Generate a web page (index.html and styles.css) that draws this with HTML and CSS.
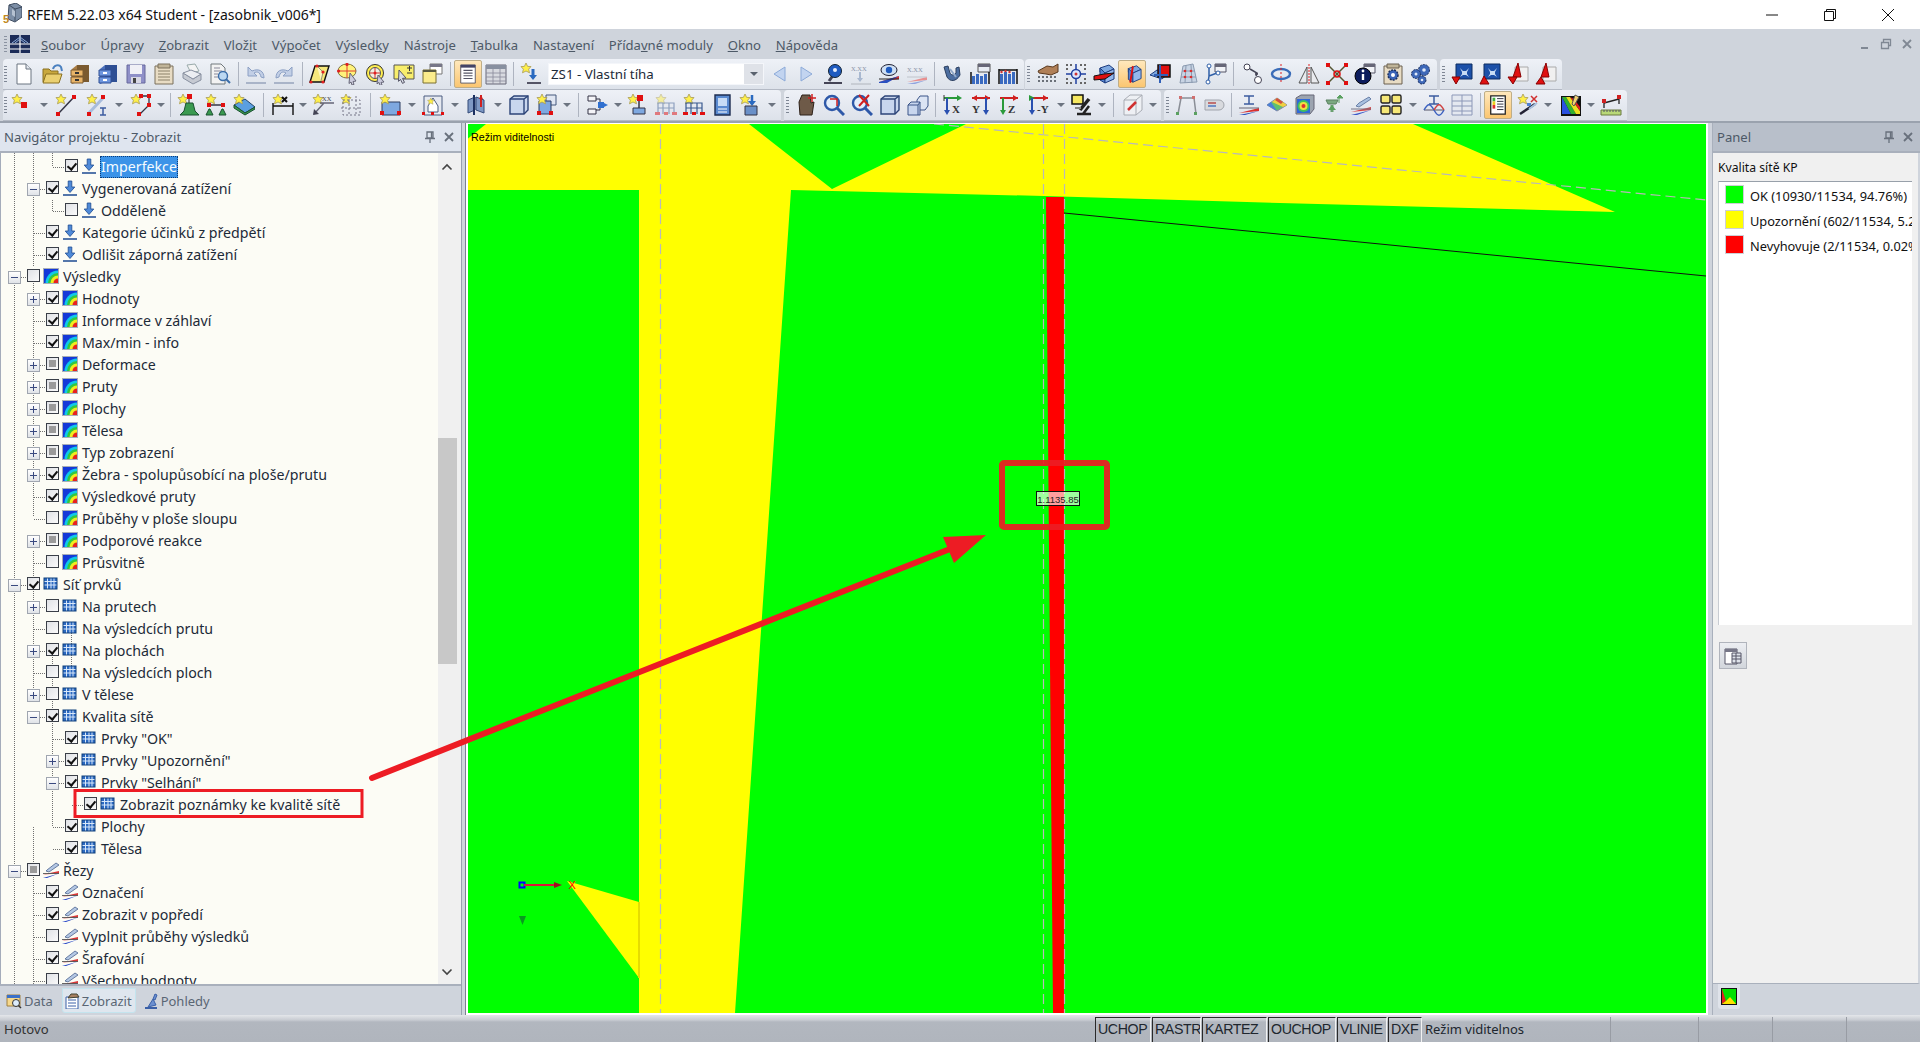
FILE: index.html
```html
<!DOCTYPE html>
<html lang="cs">
<head>
<meta charset="utf-8">
<title>RFEM 5.22.03 x64 Student - [zasobnik_v006*]</title>
<link rel="stylesheet" href="styles.css">
</head>
<body>
<svg class="defs" width="0" height="0">
<defs>
<symbol id="star" viewBox="0 0 22 22"><path d="M6 0l1.600 3.400L11 3.600 8.600 6.200l.9 3.600L6 8 2.500 9.800l.9-3.600L1 3.600l3.400-.2z" fill="#fff04a" stroke="#a89a50" stroke-width=".8"/></symbol>
<symbol id="new" viewBox="0 0 22 22"><path d="M4 1h9l5 5v15H4z" fill="#fff" stroke="#6b7480"/><path d="M13 1v5h5" fill="#e4e8ee" stroke="#6b7480"/></symbol>
<symbol id="open" viewBox="0 0 22 22"><path d="M2 19V6h6l2 2h7v3" fill="#c8a83e" stroke="#8a7020"/><path d="M2 20l3-9h16l-3 9z" fill="#ead070" stroke="#8a7020"/><path d="M12 6c1-4 6-5 8-2l1 4" fill="none" stroke="#4a80c0" stroke-width="2"/></symbol>
<symbol id="cabT" viewBox="0 0 22 22"><path d="M8 2h12v17H8z" fill="#7a5a30"/><path d="M3 6l5-4v17l-5 2z" fill="#a87c44"/><path d="M2 7h12v6H2zM2 14h12v6H2z" fill="#e8b468" stroke="#7a5a30"/><path d="M6 9h4v2H6zM6 16h4v2H6z" fill="#333"/></symbol>
<symbol id="cabB" viewBox="0 0 22 22"><path d="M8 2h12v17H8z" fill="#2e4f94"/><path d="M3 6l5-4v17l-5 2z" fill="#4a70bc"/><path d="M2 7h12v6H2zM2 14h12v6H2z" fill="#6e96de" stroke="#2e4f94"/><path d="M6 9h4v2H6zM6 16h4v2H6z" fill="#fff"/></symbol>
<symbol id="save" viewBox="0 0 22 22"><path d="M2 2h18v18H2z" fill="#8f90c8" stroke="#66689c"/><path d="M5 2h12v9H5z" fill="#f0f0f6"/><path d="M6 14h10v6H6z" fill="#d8d8e4"/><path d="M8 15h3v5H8z" fill="#444"/></symbol>
<symbol id="notes" viewBox="0 0 22 22"><path d="M2 3h18v18H2z" fill="#e8dcc4" stroke="#7a705c"/><path d="M5 1h12v4H5z" fill="#c0b498" stroke="#7a705c"/><path d="M5 8h12M5 11h12M5 14h12M5 17h12" stroke="#8a8068"/></symbol>
<symbol id="print" viewBox="0 0 22 22"><path d="M6 2l8-1 4 7-8 2z" fill="#f4f4f4" stroke="#9aa"/><path d="M2 10l10 6 8-5v6l-8 4-10-6z" fill="#c6cad2" stroke="#8890a0"/><path d="M2 10l8-3 10 4-8 5z" fill="#eceef2" stroke="#8890a0"/></symbol>
<symbol id="prev" viewBox="0 0 22 22"><path d="M2 1h10l4 4v16H2z" fill="#f2f2f2" stroke="#70787c"/><path d="M5 5h6M5 8h8M5 11h4M5 14h4" stroke="#889"/><circle cx="14" cy="13" r="4.500" fill="#bcd8f2" stroke="#3a6ca8" stroke-width="1.400"/><path d="M17 16l4 4" stroke="#3a6ca8" stroke-width="2"/></symbol>
<symbol id="undo" viewBox="0 0 22 22"><path d="M1 20h20" stroke="#a9b4c8" stroke-width="2"/><path d="M3 4v9h9l-3-3c3-2 6-1 7 4l3 1c0-7-5-10-12-7z" fill="#c2cfe6" stroke="#8ca0c4"/></symbol>
<symbol id="redo" viewBox="0 0 22 22"><path d="M1 20h20" stroke="#a9b4c8" stroke-width="2"/><path d="M19 4v9h-9l3-3c-3-2-6-1-7 4l-3 1c0-7 5-10 12-7z" fill="#c2cfe6" stroke="#8ca0c4"/></symbol>
<symbol id="plane" viewBox="0 0 22 22"><path d="M6 3h14l-5 16H1z" fill="#f6e87c" stroke="#111" stroke-width="1.400"/><path d="M8 3l6 6-2 9" fill="#fff8c0" stroke="#555" stroke-width=".6"/><g fill="#e02020"><circle cx="8" cy="3" r="1.600"/><circle cx="2" cy="19" r="1.600"/><circle cx="14" cy="19" r="1.600"/><circle cx="14" cy="9" r="1.600"/></g></symbol>
<symbol id="zoomy" viewBox="0 0 22 22"><ellipse cx="10" cy="8" rx="9" ry="7" fill="#fff27a" stroke="#7c7440"/><path d="M10 1v14M1 8h18" stroke="#e04030"/><circle cx="10" cy="1.500" r="1.600" fill="#e02020"/><circle cx="1.600" cy="8" r="1.600" fill="#e02020"/><path d="M13 10l6 8-3 .5 1 3-2 .5-1-3-2 1.500z" fill="#ccd" stroke="#667"/></symbol>
<symbol id="target" viewBox="0 0 22 22"><circle cx="10" cy="10" r="8.500" fill="#ffee50" stroke="#333"/><circle cx="10" cy="10" r="5.500" fill="#f0f0e4" stroke="#555"/><path d="M10 5v10M5 10h10" stroke="#d03030"/><circle cx="10" cy="10" r="1.500" fill="#e02020"/><path d="M13 12l6 7-3 .4 1 2.600-2 .4-1-3-2 1.500z" fill="#ccd" stroke="#667"/></symbol>
<symbol id="note" viewBox="0 0 22 22"><path d="M1 2h20v14H1z" fill="#f8ee6c" stroke="#555"/><path d="M14 5h5M16.500 3v5M14 10h5" stroke="#333"/><path d="M6 7l7 8-3.500.4 2 4-2 1-2-4-2 2z" fill="#d8dce6" stroke="#556"/></symbol>
<symbol id="win" viewBox="0 0 22 22"><path d="M9 1h12v10H9z" fill="#fff" stroke="#777"/><path d="M9 1h12v3H9z" fill="#778"/><path d="M2 7h13v13H2z" fill="#fbec8c" stroke="#7a7030"/><path d="M2 7h13v2H2z" fill="#5a5a40"/></symbol>
<symbol id="list" viewBox="0 0 22 22"><path d="M3 1h16v20H3z" fill="#fff" stroke="#556"/><path d="M3 1h16v3H3z" fill="#446"/><path d="M6 7h10M6 10h10M6 13h10M6 16h10" stroke="#556" stroke-width="1.200"/></symbol>
<symbol id="table" viewBox="0 0 22 22"><path d="M1 2h20v19H1z" fill="#d8dae0" stroke="#667"/><path d="M1 2h20v4H1z" fill="#8890a0"/><path d="M1 10h20M1 14h20M1 18h20M8 6v15M15 6v15" stroke="#889" stroke-width=".8"/></symbol>
<symbol id="zs" viewBox="0 0 22 22"><use href="#star" width="22" height="22"/><path d="M13 6v9" stroke="#2a6ac0" stroke-width="3"/><path d="M9 12h8l-4 5z" fill="#2a6ac0"/><path d="M7 20h14" stroke="#556" stroke-width="2"/></symbol>
<symbol id="lprev" viewBox="0 0 22 22"><path d="M16 4v14L5 11z" fill="#c2d4f0" stroke="#8caad8"/></symbol>
<symbol id="lnext" viewBox="0 0 22 22"><path d="M6 4v14l11-7z" fill="#c2d4f0" stroke="#8caad8"/></symbol>
<symbol id="ball" viewBox="0 0 22 22"><path d="M2 20h18" stroke="#445" stroke-width="2"/><path d="M7 18l5-7" stroke="#445" stroke-width="3"/><circle cx="13" cy="8" r="6.500" fill="#1f5bc0" stroke="#123"/><circle cx="13" cy="7" r="2" fill="#e8eefc"/></symbol>
<symbol id="xx" viewBox="0 0 22 22"><text x="1" y="8" class="mini pale">X.XX</text><path d="M10 9v9" stroke="#a8b8d0" stroke-width="2"/><path d="M7 15h6l-3 4z" fill="#a8b8d0"/><path d="M1 21h20" stroke="#c0c4cc" stroke-width="1.500"/></symbol>
<symbol id="eye" viewBox="0 0 22 22"><ellipse cx="11" cy="7" rx="8" ry="5.500" fill="#cfe0f4" stroke="#223"/><circle cx="11" cy="7" r="3.200" fill="#1f5bc0"/><path d="M1 19l20-6v3z" fill="#d83030"/><path d="M1 19l20-6-12 7H1z" fill="#2a50c0"/><path d="M1 16h20" stroke="#222"/></symbol>
<symbol id="xxb" viewBox="0 0 22 22"><text x="1" y="9" class="mini pale">X.XX</text><path d="M1 19l20-5v3z" fill="#e89090"/><path d="M1 21l20-4-12 4z" fill="#90a4e0"/><path d="M1 14h20" stroke="#c0c4cc"/></symbol>
<symbol id="hook" viewBox="0 0 22 22"><path d="M3 4l3 10c3 5 9 5 13-2l-1-8-3 1v5c-2 3-5 2-6 0L7 3z" fill="#4c6ea0" stroke="#2c4060"/><path d="M9 6l6 8" stroke="#90a8c8" stroke-width="2"/></symbol>
<symbol id="barsw" viewBox="0 0 22 22"><path d="M9 1h12v8H9z" fill="#e8ecf4" stroke="#555"/><path d="M9 1h12v3H9z" fill="#667"/><path d="M2 21V9M20 21V9" stroke="#111" stroke-width="1.500"/><g fill="#3a6ac0"><rect x="3" y="13" width="3" height="8"/><rect x="7" y="11" width="3" height="10"/><rect x="11" y="13" width="3" height="8"/><rect x="15" y="11" width="3" height="10"/></g></symbol>
<symbol id="bars" viewBox="0 0 22 22"><path d="M2 21V6M20 21V6M2 7h18" stroke="#111" stroke-width="1.500"/><g fill="#3a6ac0"><rect x="3" y="11" width="3" height="10"/><rect x="7" y="9" width="3" height="12"/><rect x="11" y="11" width="3" height="10"/><rect x="15" y="9" width="3" height="12"/></g><g fill="#d03030"><circle cx="4.500" cy="9" r="1.200"/><circle cx="8.500" cy="8" r="1.200"/><circle cx="12.500" cy="9" r="1.200"/></g></symbol>
<symbol id="hand" viewBox="0 0 22 22"><g fill="#6a7078"><rect x="1" y="13" width="2" height="2"/><rect x="5" y="13" width="2" height="2"/><rect x="9" y="13" width="2" height="2"/><rect x="13" y="13" width="2" height="2"/><rect x="17" y="13" width="2" height="2"/><rect x="1" y="17" width="2" height="2"/><rect x="5" y="17" width="2" height="2"/><rect x="9" y="17" width="2" height="2"/><rect x="13" y="17" width="2" height="2"/><rect x="17" y="17" width="2" height="2"/></g><path d="M1 8l9-5 6 1 5-3v8l-7 3-5-1-7-1z" fill="#b08058" stroke="#5a3a20"/></symbol>
<symbol id="gridc" viewBox="0 0 22 22"><g fill="#666"><rect x="1" y="1" width="2" height="2"/><rect x="5" y="1" width="2" height="2"/><rect x="15" y="1" width="2" height="2"/><rect x="19" y="1" width="2" height="2"/><rect x="1" y="5" width="2" height="2"/><rect x="19" y="5" width="2" height="2"/><rect x="1" y="15" width="2" height="2"/><rect x="19" y="15" width="2" height="2"/><rect x="1" y="19" width="2" height="2"/><rect x="5" y="19" width="2" height="2"/><rect x="15" y="19" width="2" height="2"/><rect x="19" y="19" width="2" height="2"/></g><path d="M11 1v20M1 11h20" stroke="#2040a0" stroke-width="1.500"/><circle cx="11" cy="11" r="4.500" fill="#dce6ff" stroke="#2040a0" stroke-width="1.500"/><circle cx="11" cy="11" r="1.500" fill="#d03030"/></symbol>
<symbol id="cubeN" viewBox="0 0 22 22"><path d="M7 5l9-3 5 4-9 4-5-1z" fill="#7ea8e0" stroke="#1c3c80"/><path d="M7 5v12l5 3V10z" fill="#5684d0" stroke="#1c3c80"/><path d="M12 10l9-4v10l-9 4z" fill="#94b8ec" stroke="#1c3c80"/><path d="M1 13l10-2 10-1-9 6-11 1z" fill="#e01010" stroke="#111"/></symbol>
<symbol id="cubeO" viewBox="0 0 22 22"><path d="M7 5l9-3 5 4-9 4-5-1z" fill="#7ea8e0" stroke="#1c3c80"/><path d="M7 5v12l5 3V10z" fill="#5684d0" stroke="#1c3c80"/><path d="M12 10l9-4v10l-9 4z" fill="#94b8ec" stroke="#1c3c80"/><path d="M11 2l2 1-3 18-2-1z" fill="#e01010"/></symbol>
<symbol id="cubeR" viewBox="0 0 22 22"><path d="M1 12l7-5 13 2-8 7z" fill="#7ea8e0" stroke="#1c3c80"/><path d="M9 2h12v12H9z" fill="#e01010" stroke="#111" stroke-width="1.500"/><path d="M11 2v18M5 12h14" stroke="#3060b8" stroke-width="2"/></symbol>
<symbol id="gridb" viewBox="0 0 22 22"><path d="M3 20l3-17 10-2 4 18z" fill="#c8d4e4" stroke="#8a9ab0"/><path d="M4 14h15M5 8h13M9 2l-1 18M14 2l1 18" stroke="#8a9ab0"/><g fill="#d83030"><circle cx="8" cy="8" r="1.300"/><circle cx="14" cy="8" r="1.300"/><circle cx="8" cy="14" r="1.300"/><circle cx="14" cy="14" r="1.300"/></g></symbol>
<symbol id="pathw" viewBox="0 0 22 22"><path d="M10 1h11v8H10z" fill="#f0f2f6" stroke="#556"/><path d="M10 1h11v3H10z" fill="#667"/><path d="M4 4v9l-1 7M4 13l8-3" fill="none" stroke="#3060a8" stroke-width="1.500"/><circle cx="4" cy="3" r="2" fill="#fff" stroke="#3060a8"/><circle cx="3" cy="19" r="2" fill="#fff" stroke="#3060a8"/><circle cx="13" cy="10" r="2" fill="#fff" stroke="#3060a8"/></symbol>
<symbol id="links" viewBox="0 0 22 22"><circle cx="5" cy="4" r="3" fill="#fff" stroke="#445"/><circle cx="16" cy="17" r="3.500" fill="#fff" stroke="#445"/><path d="M8 6l7 4-1 3M16 11l-3 0" fill="none" stroke="#445" stroke-width="1.500"/></symbol>
<symbol id="rot" viewBox="0 0 22 22"><ellipse cx="11" cy="11" rx="9" ry="5" fill="none" stroke="#3a6cb8" stroke-width="2.400"/><path d="M11 1v20" stroke="#e02020" stroke-dasharray="2 2"/></symbol>
<symbol id="mirror" viewBox="0 0 22 22"><path d="M9 4v16H1z" fill="#e8eaee" stroke="#555"/><path d="M13 4v16h8z" fill="#e8eaee" stroke="#555"/><path d="M11 1v20" stroke="#e02020" stroke-dasharray="2 1"/></symbol>
<symbol id="redx" viewBox="0 0 22 22"><path d="M2 2l18 18M20 2L2 20" stroke="#553" stroke-width="1.500"/><g fill="#e01010"><rect y="0" width="4" height="4"/><rect x="18" width="4" height="4"/><rect y="18" width="4" height="4"/><rect x="18" y="18" width="4" height="4"/></g><circle cx="11" cy="11" r="3" fill="none" stroke="#e01010" stroke-width="1.500"/></symbol>
<symbol id="info" viewBox="0 0 22 22"><path d="M10 1h11v9H10z" fill="#f0f2f6" stroke="#556"/><path d="M10 1h11v3H10z" fill="#667"/><circle cx="9" cy="13" r="8" fill="#0c1c5c" stroke="#000"/><path d="M9 11v6" stroke="#fff" stroke-width="2.400"/><circle cx="9" cy="8" r="1.400" fill="#fff"/></symbol>
<symbol id="geardoc" viewBox="0 0 22 22"><path d="M2 3h18v18H2z" fill="#e8dcc4" stroke="#6a6050"/><path d="M5 1h12v4H5z" fill="#bfb498" stroke="#6a6050"/><circle cx="11" cy="12" r="5" fill="#3a64b8" stroke="#1c3060" stroke-width="1.500" stroke-dasharray="2 1"/><circle cx="11" cy="12" r="2" fill="#fff"/></symbol>
<symbol id="gears" viewBox="0 0 22 22"><g fill="#3e68b8" stroke="#1c3060" stroke-dasharray="2 1"><circle cx="14" cy="7" r="5.500"/><circle cx="6" cy="11" r="4.500"/><circle cx="12" cy="17" r="4"/></g><g fill="#dfe8f8"><circle cx="14" cy="7" r="1.800"/><circle cx="6" cy="11" r="1.500"/><circle cx="12" cy="17" r="1.300"/></g></symbol>
<symbol id="blueD" viewBox="0 0 22 22"><path d="M5 1h16v15H5z" fill="#1c50a8" stroke="#0c2c60"/><path d="M9 5l3 3h3l3-3-2 4v2l2 3-3-2h-3l-3 2 2-3V9z" fill="#c8dcf4"/><path d="M1 14h8l-4 7z" fill="#e01010" stroke="#800"/></symbol>
<symbol id="blueU" viewBox="0 0 22 22"><path d="M5 1h16v15H5z" fill="#1c50a8" stroke="#0c2c60"/><path d="M9 5l3 3h3l3-3-2 4v2l2 3-3-2h-3l-3 2 2-3V9z" fill="#c8dcf4"/><path d="M1 21h9L5 13z" fill="#e01010" stroke="#800"/></symbol>
<symbol id="redD" viewBox="0 0 22 22"><path d="M8 4h13v14H8z" fill="#f0f0f0" stroke="#aaa"/><path d="M11 0l-5 14h8z" fill="#e01010" stroke="#800"/><path d="M1 14h9l-4 7z" fill="#e01010" stroke="#800"/></symbol>
<symbol id="redU" viewBox="0 0 22 22"><path d="M8 4h13v14H8z" fill="#f0f0f0" stroke="#aaa"/><path d="M11 0l-5 14h8z" fill="#e01010" stroke="#800"/><path d="M1 21h9l-4-7z" fill="#e01010" stroke="#800"/></symbol>
<symbol id="sPt" viewBox="0 0 22 22"><use href="#star" width="22" height="22"/><rect x="10" y="8" width="6" height="6" fill="#e01010"/></symbol>
<symbol id="sLine" viewBox="0 0 22 22"><use href="#star" width="22" height="22"/><path d="M3 20L19 3" stroke="#334" stroke-width="1.500"/><rect x="17" y="1" width="4" height="4" fill="#e01010"/><rect x="1" y="18" width="4" height="4" fill="#e01010"/></symbol>
<symbol id="sLineI" viewBox="0 0 22 22"><use href="#star" width="22" height="22"/><path d="M3 19L17 4" stroke="#a8bcdc" stroke-width="3"/><rect x="15" y="1" width="4" height="4" fill="#e01010"/><rect x="1" y="18" width="4" height="4" fill="#e01010"/><path d="M14 14h6M14 21h6M17 14v7" stroke="#3c5ca0" stroke-width="1.500"/></symbol>
<symbol id="sPoly" viewBox="0 0 22 22"><use href="#star" width="22" height="22"/><path d="M10 2h9v9l-9 9" fill="none" stroke="#334" stroke-width="1.300"/><g fill="#e01010"><rect x="9" y="0" width="4" height="4"/><rect x="17" y="0" width="4" height="4"/><rect x="17" y="9" width="4" height="4"/><rect x="7" y="18" width="4" height="4"/></g></symbol>
<symbol id="sSup" viewBox="0 0 22 22"><use href="#star" width="22" height="22"/><rect x="10" y="0" width="5" height="5" fill="#e01010"/><path d="M12 5v5" stroke="#222"/><path d="M3 21l4-4 2-8h7l2 8 4 4z" fill="#3a9a50" stroke="#1a5030"/></symbol>
<symbol id="sTruss" viewBox="0 0 22 22"><use href="#star" width="22" height="22"/><path d="M4 11h14" stroke="#334" stroke-width="1.500"/><rect x="2" y="9" width="4" height="4" fill="#e01010"/><rect x="16" y="9" width="4" height="4" fill="#e01010"/><path d="M1 21l3-6h1l3 6zM14 21l3-6h1l3 6z" fill="#3a9a50" stroke="#1a5030"/></symbol>
<symbol id="sPlate" viewBox="0 0 22 22"><path d="M1 11l11-6 10 8-10 6z" fill="#5a9fe0" stroke="#246"/><path d="M1 11v3l11 7 10-6v-2l-10 6z" fill="#3a9a50" stroke="#1a5030"/><use href="#star" width="22" height="22"/></symbol>
<symbol id="sDim" viewBox="0 0 22 22"><use href="#star" width="22" height="22"/><path d="M1 12h20M1 9v12M21 9v12" stroke="#111" stroke-width="1.400"/><path d="M10 3l5 5M15 3l-5 5" stroke="#111" stroke-width="2"/></symbol>
<symbol id="sXx" viewBox="0 0 22 22"><use href="#star" width="22" height="22"/><text x="10" y="7" class="mini">XX</text><path d="M2 20L12 9M8 9h14" stroke="#667" stroke-width="1.400"/><path d="M1 21l1-6 5 5z" fill="#445"/></symbol>
<symbol id="sGrid" viewBox="0 0 22 22"><use href="#star" width="22" height="22"/><path d="M3 6h17v15H3z" fill="none" stroke="#778" stroke-dasharray="2 2"/><path d="M9 2v20M16 2v20M1 14h20" stroke="#778" stroke-dasharray="2 2"/></symbol>
<symbol id="sBox" viewBox="0 0 22 22"><path d="M3 8h18v13H3z" fill="#7ea8e0" stroke="#2c3c60"/><use href="#star" width="22" height="22"/><rect x="1" y="17" width="4" height="4" fill="#e01010"/><rect x="18" y="17" width="4" height="4" fill="#e01010"/></symbol>
<symbol id="sHouse" viewBox="0 0 22 22"><path d="M2 2h18v19H2z" fill="#e6e9f0" stroke="#4a5c80"/><path d="M6 12l5-8 5 8v6H6z" fill="#fff" stroke="#4a5c80"/><use href="#star" x="5" y="4" width="14" height="14"/><g fill="#e01010"><rect y="18" width="3" height="3"/><rect x="19" y="18" width="3" height="3"/><rect x="9" y="18" width="3" height="3"/></g></symbol>
<symbol id="sArrows" viewBox="0 0 22 22"><path d="M3 6l7-3v13l-7 3zM11 3l8 3v13l-8-3z" fill="#7e98c4" stroke="#334a78"/><path d="M9 1v20" stroke="#1c3060" stroke-width="2"/><path d="M16 1v12" stroke="#d02020" stroke-width="2"/><path d="M14 5l2-4 2 4z" fill="#d02020"/></symbol>
<symbol id="cube" viewBox="0 0 22 22"><path d="M2 5l4-3h14v14l-4 4H2z" fill="#c8d6ee" stroke="#2c4478" stroke-width="1.400"/><path d="M2 5h14v15M16 5l4-3" fill="none" stroke="#2c4478" stroke-width="1.400"/></symbol>
<symbol id="sCubes" viewBox="0 0 22 22"><path d="M10 1h10v10H10z" fill="#e0e6f2" stroke="#44587c"/><path d="M3 7h12v13H3z" fill="#7ea8e0" stroke="#2c3c60"/><use href="#star" width="22" height="22"/><rect x="1" y="17" width="4" height="4" fill="#e01010"/><rect x="13" y="17" width="4" height="4" fill="#e01010"/></symbol>
<symbol id="flow" viewBox="0 0 22 22"><path d="M1 2h8v5H1zM1 15h8v5H1z" fill="#f4f4f8" stroke="#334"/><path d="M9 5h4v11H9" fill="none" stroke="#334"/><path d="M11 8h6v6h-6z" fill="#3070d0"/><path d="M17 9l4 2-4 2z" fill="#3070d0"/></symbol>
<symbol id="flowy" viewBox="0 0 22 22"><use href="#star" width="22" height="22"/><path d="M10 1h6v6h-6z" fill="#e01010"/><path d="M12 7v7" stroke="#334" stroke-width="1.500"/><path d="M6 14h12v6H6z" fill="#7ea8e0" stroke="#334"/></symbol>
<symbol id="sTrussBox" viewBox="0 0 22 22"><use href="#star" width="22" height="22"/><path d="M3 20V9h16v11M3 14h16M8 9v11M14 9v11" fill="none" stroke="#3a5a90" stroke-width="1.200"/><g fill="#e01010"><rect x="0" y="18" width="5" height="3"/><rect x="17" y="18" width="5" height="3"/><rect x="9" y="18" width="4" height="3"/></g></symbol>
<symbol id="printb" viewBox="0 0 22 22"><path d="M4 1h15v20H4z" fill="#5a8ad0" stroke="#1c2c50" stroke-width="1.400"/><path d="M7 4h9v8H7z" fill="#c8dcf6"/><path d="M7 15h9M7 18h9" stroke="#fff"/></symbol>
<symbol id="loady" viewBox="0 0 22 22"><use href="#star" width="22" height="22"/><path d="M13 1v9" stroke="#2a6ac0" stroke-width="2.500"/><path d="M9 7h8l-4 5z" fill="#2a6ac0"/><path d="M6 12h12v9H6z" fill="#6a90c8" stroke="#334"/></symbol>
<symbol id="handx" viewBox="0 0 22 22"><path d="M4 8l3-7h8l1 8 3-1-2 13H5z" fill="#6e5a48" stroke="#2c2018"/><path d="M13 4h8M17 0v8" stroke="#d02020" stroke-width="1.500"/></symbol>
<symbol id="mag" viewBox="0 0 22 22"><circle cx="9" cy="9" r="7" fill="#e4eefa" stroke="#2e58a8" stroke-width="2.400"/><path d="M14 14l7 7" stroke="#2e58a8" stroke-width="3"/><path d="M7 5h7v7" fill="none" stroke="#d02020" stroke-width="1.500"/></symbol>
<symbol id="magx" viewBox="0 0 22 22"><circle cx="9" cy="9" r="7" fill="#e4eefa" stroke="#2e58a8" stroke-width="2.400"/><path d="M14 14l7 7" stroke="#2e58a8" stroke-width="3"/><path d="M8 1l10 11M18 1L8 12" stroke="#d02020" stroke-width="2"/></symbol>
<symbol id="cubes2" viewBox="0 0 22 22"><path d="M10 6l3-4h8v10l-3 4h-8z" fill="#dbe4f4" stroke="#3a5488"/><path d="M1 11l3-3h9v13H1z" fill="#c8d6ee" stroke="#3a5488"/><path d="M1 11h10v10M11 11l2-3" fill="none" stroke="#3a5488"/></symbol>
<symbol id="axX" viewBox="0 0 22 22"><path d="M2 4h16" stroke="#2a9a3a" stroke-width="2"/><path d="M15 1l5 3-5 3z" fill="#2a9a3a"/><path d="M5 4v15" stroke="#2a50b0" stroke-width="2"/><path d="M2 16h6l-3 5z" fill="#2a50b0"/><path d="M2 1v6" stroke="#333"/><text x="10" y="19" class="ax">X</text></symbol>
<symbol id="axY" viewBox="0 0 22 22"><path d="M2 4h18" stroke="#d02020" stroke-width="2"/><path d="M15 1l5 3-5 3zM7 1L2 4l5 3z" fill="#d02020"/><path d="M16 4v15" stroke="#2a50b0" stroke-width="2"/><path d="M13 16h6l-3 5z" fill="#2a50b0"/><text x="2" y="19" class="ax">Y</text></symbol>
<symbol id="axZ" viewBox="0 0 22 22"><path d="M2 4h18" stroke="#d02020" stroke-width="2"/><path d="M15 1l5 3-5 3z" fill="#d02020"/><path d="M5 4v15" stroke="#2a9a3a" stroke-width="2"/><path d="M2 16h6l-3 5z" fill="#2a9a3a"/><text x="10" y="19" class="ax">Z</text></symbol>
<symbol id="axMY" viewBox="0 0 22 22"><path d="M4 4h16" stroke="#d02020" stroke-width="2"/><path d="M15 1l5 3-5 3z" fill="#d02020"/><path d="M1 1l6 3-6 3z" fill="#2a9a3a"/><path d="M4 4v15" stroke="#2a50b0" stroke-width="2"/><path d="M1 16h6l-3 5z" fill="#2a50b0"/><text x="9" y="19" class="ax">-Y</text></symbol>
<symbol id="scope" viewBox="0 0 22 22"><path d="M1 1h11v9H1z" fill="#f6e860" stroke="#111" stroke-width="1.500"/><path d="M18 5l-9 11" stroke="#222" stroke-width="3.500"/><path d="M6 20h14M12 20l6-8" stroke="#222" stroke-width="2.500"/><path d="M4 14h6" stroke="#888" stroke-width="2"/></symbol>
<symbol id="boxpen" viewBox="0 0 22 22"><path d="M2 6l6-5h12v15l-6 5H2z" fill="#eef0f4" stroke="#a8acb4"/><path d="M2 6h12v15M14 6l6-5" fill="none" stroke="#a8acb4"/><path d="M6 16l8-8" stroke="#d03030" stroke-width="2.500"/></symbol>
<symbol id="gate" viewBox="0 0 22 22"><path d="M3 20L6 4h13l2 16" fill="none" stroke="#8a8e96" stroke-width="1.500"/><g fill="#d07070"><rect x="4" y="2" width="3" height="3"/><rect x="17" y="2" width="3" height="3"/></g><g fill="#5aa060"><rect x="1" y="18" width="3" height="3"/><rect x="19" y="18" width="3" height="3"/></g></symbol>
<symbol id="pill" viewBox="0 0 22 22"><path d="M2 6h14a5 5 0 0 1 0 10H2z" fill="#d8dade" stroke="#a0a4ac"/><path d="M5 9h8" stroke="#c07070" stroke-width="2"/><path d="M5 12h8" stroke="#7090c8" stroke-width="2"/></symbol>
<symbol id="beamA" viewBox="0 0 22 22"><path d="M6 2h10M6 10h10M11 2v8" stroke="#3c5ca0" stroke-width="1.500"/><path d="M1 19l20-5v3z" fill="#d83030"/><path d="M1 21l20-4-14 4z" fill="#2a50c0"/><path d="M1 14h20" stroke="#667"/></symbol>
<symbol id="rainp" viewBox="0 0 22 22"><path d="M1 11l10-7 10 7-10 6z" fill="#60c070" stroke="#88a"/><path d="M6 8l5-4 10 7-4 2z" fill="#f0d040"/><path d="M9 6l2-2 6 4-2 2z" fill="#d05040"/><path d="M1 11l4-3 6 9z" fill="#4a80d8"/></symbol>
<symbol id="rainc" viewBox="0 0 22 22"><path d="M2 4l5-3h13v14l-4 5H2z" fill="#9ca4b0" stroke="#667"/><path d="M3 5h13v14H3z" fill="#3068d8"/><circle cx="9.500" cy="12" r="6" fill="#40c060"/><circle cx="9.500" cy="12" r="4" fill="#f0e040"/><circle cx="9.500" cy="12" r="2" fill="#e03030"/></symbol>
<symbol id="gsup" viewBox="0 0 22 22"><path d="M4 6h12l-2 4H6z" fill="#7aa880" stroke="#5a8060"/><path d="M10 11v7" stroke="#6aa070" stroke-width="3"/><path d="M6 16h8l-4-5z" fill="#5aa060"/><path d="M15 4h6l-3-3zM17 4v5" fill="#5aa060" stroke="#5aa060"/></symbol>
<symbol id="sect" viewBox="0 0 22 22"><path d="M9 9L19 3l2 2-12 8-3-1z" fill="#a8c0e0" stroke="#6a80a8"/><path d="M1 18l20-5v3z" fill="#d84040"/><path d="M1 21l20-5-14 5z" fill="#3a58c8"/><path d="M1 15h20" stroke="#778"/></symbol>
<symbol id="wave" viewBox="0 0 22 22"><path d="M6 2h10M6 10h10M11 2v8" stroke="#3c5ca0" stroke-width="1.500"/><path d="M1 16h20" stroke="#556"/><path d="M1 16c4-7 6-7 10 0s6 7 10 0" fill="none" stroke="#3a60c0" stroke-width="1.500"/><path d="M11 16c4-7 6-7 10 0" fill="none" stroke="#d04040" stroke-width="1.500"/></symbol>
<symbol id="tabs4" viewBox="0 0 22 22"><g fill="#f6e878" stroke="#222" stroke-width="1.400"><rect x="1" y="1" width="9" height="8" rx="1.500"/><rect x="12" y="1" width="9" height="8" rx="1.500"/><rect x="1" y="12" width="9" height="8" rx="1.500"/><rect x="12" y="12" width="9" height="8" rx="1.500"/></g></symbol>
<symbol id="tabg" viewBox="0 0 22 22"><path d="M1 1h20v20H1z" fill="#e4e8f0" stroke="#8c98b8"/><path d="M1 7h20M1 12h20M1 17h20M11 1v20" stroke="#8c98b8"/></symbol>
<symbol id="leg" viewBox="0 0 22 22"><path d="M3 1h16v20H3z" fill="#fff" stroke="#222" stroke-width="1.400"/><path d="M5 3h3v4H5z" fill="#40b040"/><path d="M5 7h3v4H5z" fill="#f0d020"/><path d="M5 11h3v4H5z" fill="#e03030"/><path d="M10 4h7M10 7h7M10 10h7M10 13h7M10 16h7" stroke="#223"/></symbol>
<symbol id="wand" viewBox="0 0 22 22"><use href="#star" width="22" height="22"/><path d="M3 20l15-10" stroke="#223" stroke-width="2.500"/><path d="M12 15l8-6" stroke="#a8c0e0" stroke-width="2"/><path d="M14 2l6 6M20 2l-6 6" stroke="#d03030" stroke-width="1.500"/><path d="M10 9h4v3h-4z" fill="#5080d0"/></symbol>
<symbol id="rainb" viewBox="0 0 22 22"><path d="M1 2h20v20H1z" fill="#111"/><path d="M2 3l9 17H2z" fill="#2a50e0"/><path d="M2 3l4 0 10 17h-5z" fill="#30b030"/><path d="M6 3l4 0 10 14v3h-4z" fill="#e8e020"/><path d="M10 3l4 2 6 8v4z" fill="#e02020"/><path d="M15 1l4 2-5 9-2-2z" fill="#f2d070" stroke="#555"/></symbol>
<symbol id="ruler" viewBox="0 0 22 22"><path d="M1 16h20v5H1z" fill="#b8d878" stroke="#6a7a40"/><path d="M4 16v2M7 16v2M10 16v2M13 16v2M16 16v2M19 16v2" stroke="#556"/><path d="M4 9l15-4M4 5v9M19 1v9" stroke="#222" stroke-width="1.300"/><rect x="2" y="5" width="4" height="4" fill="#d02020"/><rect x="17" y="1" width="4" height="4" fill="#d02020"/></symbol>
<symbol id="load" viewBox="0 0 16 16"><path d="M6.200 1h3.600v6h3L8 12.500 3.200 7h3z" fill="#4f8ad8" stroke="#1c4a90" stroke-width=".8"/><path d="M1 15h14" stroke="#1c4a90" stroke-width="1.500"/></symbol>
<symbol id="rain" viewBox="0 0 16 16"><rect width="16" height="16" fill="#a8aeb8"/><rect x="1" y="1" width="14" height="14" fill="#1438d8"/><path d="M15 2.500A12.500 12.500 0 0 0 2.500 15H15z" fill="#10c8e8"/><path d="M15 5A10 10 0 0 0 5 15h10z" fill="#30c840"/><path d="M15 7.500A7.500 7.500 0 0 0 7.500 15H15z" fill="#f0ec20"/><path d="M15 10.500A4.500 4.500 0 0 0 10.500 15H15z" fill="#e82020"/></symbol>
<symbol id="mesh" viewBox="0 0 16 16"><rect x="1" y="2" width="13" height="11" fill="#2a68c0"/><path d="M1 5.500h13M1 9h13M4.500 2v11M8 2v11M11 2v11" stroke="#d8e8fa"/><rect x="1" y="2" width="13" height="11" fill="none" stroke="#10407c"/></symbol>
<symbol id="mini-sec" viewBox="0 0 16 16"><path d="M4 8l9-7 3 2-10 7-3-1z" fill="#b4c8e4" stroke="#5a7098" stroke-width=".9"/><path d="M0 12.500L16 9v2.500z" fill="#d83838"/><path d="M0 16l16-4.500L4 16z" fill="#2848c8"/><path d="M0 11.500h16" stroke="#555" stroke-width=".9"/></symbol>
<symbol id="pin" viewBox="0 0 12 12"><path d="M3 1h6v6H3zM1 7.500h10M6 8v4M7.500 1v6" fill="none" stroke="#68707c" stroke-width="1.300"/></symbol>
<symbol id="x" viewBox="0 0 12 12"><path d="M2 2l8 8M10 2l-8 8" stroke="#68707c" stroke-width="1.800"/></symbol>
</defs>
</svg>

<div class="app">
  <header class="titlebar">
    <svg class="appicon" viewBox="0 0 20 24"><path d="M7 2l7-2 6 4v10l-7 5-7-3z" fill="#7c8ea6" stroke="#3e4c60"/><path d="M7 2l6 4v12" fill="none" stroke="#3e4c60"/><path d="M13 6l7-2" stroke="#3e4c60"/><path d="M10 6l3 2v6l-3-2z" fill="#b6c2d2"/><text x="1" y="20" class="five">5</text></svg>
    <span class="apptitle">RFEM 5.22.03 x64 Student - [zasobnik_v006*]</span>
    <div class="winctl">
      <svg viewBox="0 0 14 14"><path d="M1 7h12" stroke="#111" stroke-width="1"/></svg>
      <svg viewBox="0 0 14 14"><path d="M1.500 3.500h9v9h-9zM3.500 3.500v-2h9v9h-2" fill="none" stroke="#111"/></svg>
      <svg viewBox="0 0 14 14"><path d="M1 1l12 12M13 1L1 13" stroke="#111"/></svg>
    </div>
  </header>

  <nav class="menubar">
    <span class="grip"></span>
    <svg class="logo" viewBox="0 0 20 18"><rect width="20" height="18" fill="#1c2c58"/><path d="M0 9h20M10 0v18" stroke="#fff" stroke-width="1.200"/><path d="M2 8l8-6 8 6M5 8l5-4 5 4" fill="none" stroke="#8fb0e0"/><path d="M0 14h20" stroke="#fff"/></svg>
    <div class="menuitems">
      <span><u>S</u>oubor</span><span>Úpr<u>a</u>vy</span><span><u>Z</u>obrazit</span><span>Vlož<u>i</u>t</span><span>Vý<u>p</u>očet</span><span>Výsled<u>k</u>y</span><span>Nástro<u>j</u>e</span><span><u>T</u>abulka</span><span>Nasta<u>v</u>ení</span><span>Přída<u>v</u>né moduly</span><span><u>O</u>kno</span><span><u>N</u>ápověda</span>
    </div>
    <div class="mdictl">
      <svg viewBox="0 0 12 12"><path d="M2 10h7" stroke="#808894" stroke-width="2"/></svg>
      <svg viewBox="0 0 12 12"><path d="M1.500 4.500h7v6h-7zM3.500 4.500v-3h7v6h-2" fill="none" stroke="#808894" stroke-width="1.300"/></svg>
      <svg viewBox="0 0 12 12"><path d="M2 2l8 8M10 2l-8 8" stroke="#808894" stroke-width="1.800"/></svg>
    </div>
  </nav>

  <div class="tbrow one">
    <div class="tb first">
      <i class="tgrip"></i>
      <b class="b"><svg><use href="#new"/></svg></b><b class="b"><svg><use href="#open"/></svg></b><b class="b"><svg><use href="#cabT"/></svg></b><b class="b"><svg><use href="#cabB"/></svg></b><b class="b"><svg><use href="#save"/></svg></b><b class="b"><svg><use href="#notes"/></svg></b><b class="b"><svg><use href="#print"/></svg></b><b class="b"><svg><use href="#prev"/></svg></b>
      <i class="s w8"></i>
      <b class="b"><svg><use href="#undo"/></svg></b><b class="b"><svg><use href="#redo"/></svg></b>
      <i class="s w8"></i>
      <b class="b"><svg><use href="#plane"/></svg></b><b class="b"><svg><use href="#zoomy"/></svg></b><b class="b"><svg><use href="#target"/></svg></b><b class="b"><svg><use href="#note"/></svg></b><b class="b"><svg><use href="#win"/></svg></b>
      <i class="s w8"></i>
      <b class="b on"><svg><use href="#list"/></svg></b><b class="b"><svg><use href="#table"/></svg></b>
      <i class="s w7"></i>
      <b class="b"><svg><use href="#zs"/></svg></b>
      <div class="combo"><span>ZS1 - Vlastní tíha</span><em></em></div>
      <b class="b n26 ml3"><svg><use href="#lprev"/></svg></b><b class="b n26"><svg><use href="#lnext"/></svg></b>
      <b class="b"><svg><use href="#ball"/></svg></b><b class="b"><svg><use href="#xx"/></svg></b><b class="b"><svg><use href="#eye"/></svg></b><b class="b"><svg><use href="#xxb"/></svg></b>
      <i class="s w7"></i>
      <b class="b"><svg><use href="#hook"/></svg></b><b class="b"><svg><use href="#barsw"/></svg></b><b class="b"><svg><use href="#bars"/></svg></b>
    </div>
    <div class="tb">
      <i class="tgrip"></i>
      <b class="b ml1"><svg><use href="#hand"/></svg></b><b class="b"><svg><use href="#gridc"/></svg></b><b class="b"><svg><use href="#cubeN"/></svg></b><b class="b on"><svg><use href="#cubeO"/></svg></b><b class="b"><svg><use href="#cubeR"/></svg></b><b class="b"><svg><use href="#gridb"/></svg></b><b class="b"><svg><use href="#pathw"/></svg></b>
      <i class="s w7"></i>
      <b class="b ml2"><svg><use href="#links"/></svg></b><b class="b"><svg><use href="#rot"/></svg></b><b class="b"><svg><use href="#mirror"/></svg></b><b class="b"><svg><use href="#redx"/></svg></b><b class="b"><svg><use href="#info"/></svg></b><b class="b"><svg><use href="#geardoc"/></svg></b><b class="b"><svg><use href="#gears"/></svg></b>
    </div>
    <div class="tb">
      <i class="tgrip"></i>
      <b class="b"><svg><use href="#blueD"/></svg></b><b class="b"><svg><use href="#blueU"/></svg></b><b class="b"><svg><use href="#redD"/></svg></b><b class="b"><svg><use href="#redU"/></svg></b>
    </div>
  </div>

  <div class="tbrow two">
    <div class="tb">
      <i class="tgrip"></i>
      <b class="b"><svg><use href="#sPt"/></svg></b><i class="d w16"></i><b class="b"><svg><use href="#sLine"/></svg></b><b class="b ml3"><svg><use href="#sLineI"/></svg></b><i class="d w16"></i><b class="b"><svg><use href="#sPoly"/></svg></b><i class="d"></i>
      <i class="s w7"></i>
      <b class="b"><svg><use href="#sSup"/></svg></b><b class="b"><svg><use href="#sTruss"/></svg></b><b class="b"><svg><use href="#sPlate"/></svg></b>
      <i class="s w11"></i>
      <b class="b"><svg><use href="#sDim"/></svg></b><i class="d"></i><b class="b"><svg><use href="#sXx"/></svg></b><b class="b"><svg><use href="#sGrid"/></svg></b>
      <i class="s w11"></i>
      <b class="b"><svg><use href="#sBox"/></svg></b><i class="d w15"></i><b class="b"><svg><use href="#sHouse"/></svg></b><i class="d w15"></i><b class="b"><svg><use href="#sArrows"/></svg></b><i class="d w15"></i><b class="b"><svg><use href="#cube"/></svg></b><b class="b"><svg><use href="#sCubes"/></svg></b><i class="d"></i>
      <i class="s w11"></i>
      <b class="b"><svg><use href="#flow"/></svg></b><i class="d"></i><b class="b"><svg><use href="#flowy"/></svg></b><b class="b pale"><svg><use href="#sTrussBox"/></svg></b><b class="b"><svg><use href="#sTrussBox"/></svg></b><b class="b"><svg><use href="#printb"/></svg></b><b class="b"><svg><use href="#loady"/></svg></b><i class="d w15"></i>
    </div>
    <div class="tb">
      <i class="tgrip"></i>
      <b class="b"><svg><use href="#handx"/></svg></b><b class="b"><svg><use href="#mag"/></svg></b><b class="b"><svg><use href="#magx"/></svg></b><b class="b"><svg><use href="#cube"/></svg></b><b class="b"><svg><use href="#cubes2"/></svg></b>
      <i class="s w7"></i>
      <b class="b"><svg><use href="#axX"/></svg></b><b class="b"><svg><use href="#axY"/></svg></b><b class="b"><svg><use href="#axZ"/></svg></b><b class="b ml2"><svg><use href="#axMY"/></svg></b><i class="d w15"></i><b class="b"><svg><use href="#scope"/></svg></b><i class="d"></i>
      <i class="s w11"></i>
      <b class="b"><svg><use href="#boxpen"/></svg></b><i class="d"></i>
    </div>
    <div class="tb">
      <i class="tgrip"></i>
      <b class="b"><svg><use href="#gate"/></svg></b><b class="b"><svg><use href="#pill"/></svg></b>
      <i class="s w7"></i>
      <b class="b"><svg><use href="#beamA"/></svg></b><b class="b"><svg><use href="#rainp"/></svg></b><b class="b"><svg><use href="#rainc"/></svg></b><b class="b"><svg><use href="#gsup"/></svg></b><b class="b"><svg><use href="#sect"/></svg></b><b class="b ml2"><svg><use href="#tabs4"/></svg></b><i class="d w15"></i><b class="b"><svg><use href="#wave"/></svg></b><b class="b"><svg><use href="#tabg"/></svg></b>
      <i class="s w8"></i>
      <b class="b on"><svg><use href="#leg"/></svg></b><b class="b ml2"><svg><use href="#wand"/></svg></b><i class="d"></i><b class="b ml3"><svg><use href="#rainb"/></svg></b><i class="d"></i><b class="b"><svg><use href="#ruler"/></svg></b>
    </div>
  </div>

  <main class="workspace">
    <aside class="navigator">
      <div class="dock-head">
        <span>Navigátor projektu - Zobrazit</span>
        <svg class="dock-ico"><use href="#pin"/></svg>
        <svg class="dock-ico"><use href="#x"/></svg>
      </div>
      <div class="nav-body">
        <div class="tree">
          <svg class="guides" width="438" height="831"><path d="M14.500 0V831M33.500 0V113M33.500 124V364M33.500 398V542M33.500 674V831M52.500 0V14M52.500 47V58M52.500 498V674M71.500 476V520"/></svg>
          <div class="row l3"><span class="slot"></span><span class="cb on"></span><svg class="ti"><use href="#load"/></svg><span class="lb sel">Imperfekce</span></div>
          <div class="row l2"><span class="slot"><i class="ex minus"></i></span><span class="cb on"></span><svg class="ti"><use href="#load"/></svg><span class="lb">Vygenerovaná zatížení</span></div>
          <div class="row l3"><span class="slot"></span><span class="cb"></span><svg class="ti"><use href="#load"/></svg><span class="lb">Odděleně</span></div>
          <div class="row l2"><span class="slot"></span><span class="cb on"></span><svg class="ti"><use href="#load"/></svg><span class="lb">Kategorie účinků z předpětí</span></div>
          <div class="row l2"><span class="slot"></span><span class="cb on"></span><svg class="ti"><use href="#load"/></svg><span class="lb">Odlišit záporná zatížení</span></div>
          <div class="row l1"><span class="slot"><i class="ex minus"></i></span><span class="cb"></span><svg class="ti"><use href="#rain"/></svg><span class="lb">Výsledky</span></div>
          <div class="row l2"><span class="slot"><i class="ex plus"></i></span><span class="cb on"></span><svg class="ti"><use href="#rain"/></svg><span class="lb">Hodnoty</span></div>
          <div class="row l2"><span class="slot"></span><span class="cb on"></span><svg class="ti"><use href="#rain"/></svg><span class="lb">Informace v záhlaví</span></div>
          <div class="row l2"><span class="slot"></span><span class="cb on"></span><svg class="ti"><use href="#rain"/></svg><span class="lb">Max/min - info</span></div>
          <div class="row l2"><span class="slot"><i class="ex plus"></i></span><span class="cb part"></span><svg class="ti"><use href="#rain"/></svg><span class="lb">Deformace</span></div>
          <div class="row l2"><span class="slot"><i class="ex plus"></i></span><span class="cb part"></span><svg class="ti"><use href="#rain"/></svg><span class="lb">Pruty</span></div>
          <div class="row l2"><span class="slot"><i class="ex plus"></i></span><span class="cb part"></span><svg class="ti"><use href="#rain"/></svg><span class="lb">Plochy</span></div>
          <div class="row l2"><span class="slot"><i class="ex plus"></i></span><span class="cb part"></span><svg class="ti"><use href="#rain"/></svg><span class="lb">Tělesa</span></div>
          <div class="row l2"><span class="slot"><i class="ex plus"></i></span><span class="cb part"></span><svg class="ti"><use href="#rain"/></svg><span class="lb">Typ zobrazení</span></div>
          <div class="row l2"><span class="slot"><i class="ex plus"></i></span><span class="cb on"></span><svg class="ti"><use href="#rain"/></svg><span class="lb">Žebra - spolupůsobící na ploše/prutu</span></div>
          <div class="row l2"><span class="slot"></span><span class="cb on"></span><svg class="ti"><use href="#rain"/></svg><span class="lb">Výsledkové pruty</span></div>
          <div class="row l2"><span class="slot"></span><span class="cb"></span><svg class="ti"><use href="#rain"/></svg><span class="lb">Průběhy v ploše sloupu</span></div>
          <div class="row l2"><span class="slot"><i class="ex plus"></i></span><span class="cb part"></span><svg class="ti"><use href="#rain"/></svg><span class="lb">Podporové reakce</span></div>
          <div class="row l2"><span class="slot"></span><span class="cb"></span><svg class="ti"><use href="#rain"/></svg><span class="lb">Průsvitně</span></div>
          <div class="row l1"><span class="slot"><i class="ex minus"></i></span><span class="cb on"></span><svg class="ti"><use href="#mesh"/></svg><span class="lb">Síť prvků</span></div>
          <div class="row l2"><span class="slot"><i class="ex plus"></i></span><span class="cb"></span><svg class="ti"><use href="#mesh"/></svg><span class="lb">Na prutech</span></div>
          <div class="row l2"><span class="slot"></span><span class="cb"></span><svg class="ti"><use href="#mesh"/></svg><span class="lb">Na výsledcích prutu</span></div>
          <div class="row l2"><span class="slot"><i class="ex plus"></i></span><span class="cb on"></span><svg class="ti"><use href="#mesh"/></svg><span class="lb">Na plochách</span></div>
          <div class="row l2"><span class="slot"></span><span class="cb"></span><svg class="ti"><use href="#mesh"/></svg><span class="lb">Na výsledcích ploch</span></div>
          <div class="row l2"><span class="slot"><i class="ex plus"></i></span><span class="cb"></span><svg class="ti"><use href="#mesh"/></svg><span class="lb">V tělese</span></div>
          <div class="row l2"><span class="slot"><i class="ex minus"></i></span><span class="cb on"></span><svg class="ti"><use href="#mesh"/></svg><span class="lb">Kvalita sítě</span></div>
          <div class="row l3"><span class="slot"></span><span class="cb on"></span><svg class="ti"><use href="#mesh"/></svg><span class="lb">Prvky "OK"</span></div>
          <div class="row l3"><span class="slot"><i class="ex plus"></i></span><span class="cb on"></span><svg class="ti"><use href="#mesh"/></svg><span class="lb">Prvky "Upozornění"</span></div>
          <div class="row l3"><span class="slot"><i class="ex minus"></i></span><span class="cb on"></span><svg class="ti"><use href="#mesh"/></svg><span class="lb">Prvky "Selhání"</span></div>
          <div class="row l4"><span class="slot"></span><span class="cb on"></span><svg class="ti"><use href="#mesh"/></svg><span class="lb">Zobrazit poznámky ke kvalitě sítě</span></div>
          <div class="row l3"><span class="slot"></span><span class="cb on"></span><svg class="ti"><use href="#mesh"/></svg><span class="lb">Plochy</span></div>
          <div class="row l3"><span class="slot"></span><span class="cb on"></span><svg class="ti"><use href="#mesh"/></svg><span class="lb">Tělesa</span></div>
          <div class="row l1"><span class="slot"><i class="ex minus"></i></span><span class="cb part"></span><svg class="ti"><use href="#mini-sec"/></svg><span class="lb">Řezy</span></div>
          <div class="row l2"><span class="slot"></span><span class="cb on"></span><svg class="ti"><use href="#mini-sec"/></svg><span class="lb">Označení</span></div>
          <div class="row l2"><span class="slot"></span><span class="cb on"></span><svg class="ti"><use href="#mini-sec"/></svg><span class="lb">Zobrazit v popředí</span></div>
          <div class="row l2"><span class="slot"></span><span class="cb"></span><svg class="ti"><use href="#mini-sec"/></svg><span class="lb">Vyplnit průběhy výsledků</span></div>
          <div class="row l2"><span class="slot"></span><span class="cb on"></span><svg class="ti"><use href="#mini-sec"/></svg><span class="lb">Šrafování</span></div>
          <div class="row l2"><span class="slot"></span><span class="cb"></span><svg class="ti"><use href="#mini-sec"/></svg><span class="lb">Všechny hodnoty</span></div>
        </div>
        <div class="vscroll">
          <svg class="sarrow" viewBox="0 0 12 8"><path d="M1.500 6.500L6 2l4.500 4.500" fill="none" stroke="#444" stroke-width="1.600"/></svg>
          <div class="thumb"></div>
          <svg class="sarrow" viewBox="0 0 12 8"><path d="M1.500 1.500L6 6l4.500-4.500" fill="none" stroke="#444" stroke-width="1.600"/></svg>
        </div>
      </div>
      <div class="nav-tabs">
        <span class="tab"><svg viewBox="0 0 16 16"><path d="M1 2h13v11H1z" fill="#f6d88c" stroke="#a08040"/><path d="M1 2h13v3H1z" fill="#3a70c8"/><circle cx="10" cy="10" r="3.500" fill="#dcecfa" stroke="#333"/><path d="M12.500 12.500L15 15" stroke="#333" stroke-width="1.500"/></svg>Data</span>
        <span class="tab act"><svg viewBox="0 0 16 16"><path d="M2 4h12v12H2z" fill="#fff" stroke="#3a60a8"/><path d="M4 7h8M4 10h8M4 13h8" stroke="#3a60a8"/><path d="M4 5l3-4 6 0 2 3z" fill="#a88060" stroke="#443"/></svg>Zobrazit</span>
        <span class="tab"><svg viewBox="0 0 16 16"><path d="M2 15h12" stroke="#3a60a8" stroke-width="2"/><path d="M5 14l5-8 3 6zM10 6l2-5 2 1-2 5z" fill="#6c90d0" stroke="#3a60a8"/></svg>Pohledy</span>
      </div>
    </aside>

    <section class="viewport">
      <svg class="scene" viewBox="468 124 1238 889" preserveAspectRatio="none">
        <rect x="466" y="124" width="1240" height="889" fill="#00ff00"/>
        <path class="ye" d="M466 124H749L832 189L966 124H1413L1615 212L1280 203L1044 196L791 190L735 1013H639V190H466Z"/>
        <path class="gr" d="M466 124H486L466 140Z"/>
        <path class="ye" d="M567 881L639 902V978Z"/>
        <path d="M639 902V978" stroke="#e6dc00" stroke-width="2"/>
        <path d="M1046 197H1064V1013H1053Z" fill="#ff0000"/>
        <g class="dash"><path d="M660.500 124V1013"/><path d="M1043.500 124V1013"/><path d="M1064.500 124V1013"/><path d="M934 124L1706 200"/></g>
        <path d="M1064 213L1706 276" stroke="#111" stroke-width="1" fill="none"/>
        <text x="471" y="141" class="mode">Režim viditelnosti</text>
        <rect x="519.500" y="882.500" width="5" height="5" fill="none" stroke="#0000ff" stroke-width="2"/>
        <path d="M524 885H556" stroke="#e0103a" stroke-width="2"/>
        <path d="M554 882L562 885L554 888Z" fill="#a01020"/>
        <text x="568.500" y="889" class="axx">X</text>
        <path d="M519 916H526L522.500 925Z" fill="#0a9a20"/>
        <rect x="1036.500" y="491.500" width="43" height="14" fill="#ffffff" fill-opacity=".62" stroke="#111"/>
        <text x="1058" y="502.500" class="val">1.1135.85</text>
      </svg>
    </section>

    <aside class="panel">
      <div class="dock-head dark">
        <span>Panel</span>
        <svg class="dock-ico"><use href="#pin"/></svg>
        <svg class="dock-ico"><use href="#x"/></svg>
      </div>
      <div class="panel-body">
        <div class="panel-title">Kvalita sítě KP</div>
        <div class="legend">
          <div class="lg"><i class="sw g"></i><span>OK (10930/11534, 94.76%)</span></div>
          <div class="lg"><i class="sw y"></i><span>Upozornění (602/11534, 5.22%)</span></div>
          <div class="lg"><i class="sw r"></i><span>Nevyhovuje (2/11534, 0.02%)</span></div>
        </div>
        <div class="panel-btn"><svg viewBox="0 0 20 20"><path d="M2 3h12v15H2z" fill="#fff" stroke="#556"/><path d="M2 3h12v3H2z" fill="#778"/><path d="M9 7h9v10H9z" fill="#dfe3ea" stroke="#556"/><path d="M9 10h9M9 13h9M13 7v10" stroke="#556"/></svg></div>
      </div>
      <div class="panel-tabs">
        <span class="ptab"><svg viewBox="0 0 16 17"><rect x=".5" y=".5" width="15" height="16" fill="#00e000" stroke="#111"/><path d="M1 1l4 12-4 3z" fill="#e02020"/><path d="M1 16l4-3 4-4 6 7z" fill="#ffe000"/></svg></span>
      </div>
    </aside>
  </main>

  <footer class="statusbar">
    <span class="ready">Hotovo</span>
    <span class="pane p1">UCHOP</span><span class="pane p2">RASTR</span><span class="pane p3">KARTEZ</span><span class="pane p4">OUCHOP</span><span class="pane p5">VLINIE</span><span class="pane p6">DXF</span>
    <span class="st s1">Režim viditelnos</span><span class="st s2"></span><span class="st s3"></span><span class="st s4"></span><span class="st s5"></span>
  </footer>
</div>

<svg class="anno" viewBox="0 0 1920 1042">
  <rect x="1002" y="463" width="105" height="64" rx="2" fill="none" stroke="#ed1c24" stroke-width="6" stroke-opacity=".93"/>
  <rect x="75" y="790.500" width="287" height="26" fill="none" stroke="#ed1c24" stroke-width="3"/>
  <path d="M372 778L950 549" stroke="#ed1c24" stroke-width="6" stroke-linecap="round"/>
  <path d="M986 535L954 563L943 537Z" fill="#ed1c24"/>
</svg>
</body>
</html>
```
FILE: styles.css
```css
* { box-sizing: border-box; }
html, body { margin: 0; padding: 0; }
body { width: 1920px; height: 1042px; overflow: hidden; position: relative; font-family: "Noto Sans", "Open Sans", sans-serif; color: #1d2a38; background: #cfd4dc; }
.defs { position: absolute; }
.mini { font: 6.500px "Liberation Serif", serif; fill: #444; }
.mini.pale { fill: #8a94a8; }
.ax { font: bold 11px "Liberation Serif", serif; fill: #333; }
.five { font: bold 11px "Liberation Sans", sans-serif; fill: #c08820; }

.app { display: flex; flex-direction: column; width: 1920px; height: 1042px; }

.titlebar { height: 29px; background: #fff; display: flex; align-items: center; padding-left: 2px; flex: none; }
.appicon { width: 20px; height: 24px; margin-right: 5px; }
.apptitle { font-size: 14px; color: #111; }
.winctl { margin-left: auto; display: flex; }
.winctl svg { width: 14px; height: 14px; margin: 0 22px; }
.winctl svg:last-child { margin-right: 25px; }

.menubar { height: 30px; flex: none; background: #cfd4dc; display: flex; align-items: center; position: relative; }
.grip { width: 3px; height: 16px; margin-left: 4px; background: repeating-linear-gradient(#8a92a0 0 1px, transparent 1px 3px); }
.logo { width: 20px; height: 18px; margin-left: 3px; }
.menuitems { display: flex; margin-left: 11px; gap: 14.800px; font-size: 13.100px; color: #4d5967; padding-top: 1px; }
.mdictl { margin-left: auto; display: flex; gap: 9px; margin-right: 7px; }
.mdictl svg { width: 12px; height: 12px; }

.tbrow { flex: none; display: flex; background: #cfd4dc; padding-left: 3px; }
.tbrow.one { height: 31px; gap: 0; }
.tbrow.two { height: 33px; border-bottom: 2px solid #9aa2ae; }
.tb { display: flex; align-items: center; height: 100%; padding-right: 2px; background: linear-gradient(#eef1f7, #dde2ea); border-radius: 4px 4px 0 0; border-bottom: 1px solid #b4bac5; margin-right: 3px; }
.tb.first { margin-right: 1px; }
.tgrip { width: 3px; height: 16px; margin: 0 3px 0 2px; background: repeating-linear-gradient(#7e8694 0 1px, transparent 1px 3px); flex: none; }
.tb:first-child .tgrip { margin: 0 1px; }
.tb.first .tgrip { margin-right: 3px; }
.b { width: 28px; height: 100%; display: flex; align-items: center; justify-content: center; flex: none; }
.b svg { width: 22px; height: 22px; }
.b.on svg { width: 20px; height: 20px; }
.b.on { background: linear-gradient(#ffe8bc, #fbc671); border: 1px solid #bfae88; border-radius: 2px; height: 28px; }
.b.pale svg { opacity: .5; }
.n26 { width: 26px; }
.ml1 { margin-left: 1px; }
.ml2 { margin-left: 2px; }
.ml3 { margin-left: 3px; }
.s { flex: none; height: 24px; position: relative; display: block; }
.s::before { content: ""; position: absolute; left: 45%; top: 0; bottom: 0; width: 1px; background: #aeb4c0; }
.w7 { width: 7px; } .w8 { width: 8px; } .w11 { width: 11px; }
.d { flex: none; width: 12px; height: 100%; display: flex; align-items: center; justify-content: center; }
.d::before { content: ""; border: 4px solid transparent; border-top: 4px solid #6c7480; margin-top: 4px; }
.w15 { width: 15px; } .w16 { width: 16px; }

.combo { width: 216px; height: 22px; background: #fff; border: 1px solid #f4f6fa; display: flex; align-items: center; justify-content: space-between; font-size: 13.300px; color: #1d2a38; margin-left: 3px; padding-left: 2px; flex: none; }
.combo em { width: 19px; height: 100%; background: #dfe2e8; display: flex; align-items: center; justify-content: center; }
.combo em::before { content: ""; border: 4px solid transparent; border-top: 4px solid #5a626e; margin-top: 4px; }

.workspace { flex: 1; display: flex; min-height: 0; }
.navigator { width: 462px; flex: none; display: flex; flex-direction: column; border-right: 1px solid #97a0ad; }
.dock-head { height: 30px; flex: none; display: flex; align-items: center; background: #dfe5ef; border-bottom: 2px solid #a9b0bc; padding-left: 4px; padding-right: 6px; font-size: 13.100px; color: #4d5967; gap: 7px; }
.dock-head span { flex: 1; }
.dock-head.dark { background: #b8bfca; }
.dock-ico { width: 12px; height: 12px; }
.nav-body { flex: 1; display: flex; min-height: 0; border-left: 1px solid #a4acba; }
.tree { flex: 1; background: #fcfcf5; padding-top: 3px; overflow: hidden; position: relative; }
.guides { position: absolute; left: -1px; top: 0; }
.guides path { fill: none; stroke: #707070; stroke-width: 1; stroke-dasharray: 1 1; }

.row { height: 22px; display: flex; align-items: center; position: relative; font-size: 14.200px; color: #1d2a38; white-space: nowrap; }
.l1 { padding-left: 7px; } .l2 { padding-left: 26px; } .l3 { padding-left: 45px; } .l4 { padding-left: 64px; }
.slot { width: 19px; height: 100%; position: relative; flex: none; }
.slot::before { content: ""; position: absolute; left: 7px; right: 1px; top: 11px; border-top: 1px dotted #707070; }
.ex { position: absolute; left: 0; top: 5px; width: 13px; height: 13px; border: 1px solid #a0a6b0; background: linear-gradient(#fff, #e0e3e8); }
.ex::before { content: ""; position: absolute; left: 2px; right: 2px; top: 5px; height: 1px; background: #3a4a80; }
.ex.plus::after { content: ""; position: absolute; top: 2px; bottom: 2px; left: 5px; width: 1px; background: #3a4a80; }
.cb { width: 13px; height: 13px; flex: none; border: 1px solid #3a3f48; background: linear-gradient(135deg, #e0e2e6, #fafafa); position: relative; margin-top: -3px; }
.cb.on::after { content: ""; position: absolute; left: 3px; top: 1px; width: 4px; height: 7px; border: solid #111; border-width: 0 2px 2px 0; transform: rotate(40deg); }
.cb.part::after { content: ""; position: absolute; inset: 2px; background: #9a9a9a; }
.ti { width: 16px; height: 16px; margin-left: 3px; margin-top: -3px; flex: none; }
.lb { margin-left: 3px; padding: 0 1px; line-height: 22px; }
.lb.sel { background: #3b93e8; color: #f4fbff; outline: 1px dotted #0b3c78; outline-offset: -1px; }

.vscroll { width: 23px; flex: none; background: #f0f0f0; position: relative; display: flex; flex-direction: column; align-items: flex-start; justify-content: space-between; padding: 10px 0 8px 3px; }
.sarrow { width: 12px; height: 8px; }
.thumb { position: absolute; left: 0; right: 4px; top: 285px; height: 226px; background: #c8c8c8; }

.nav-tabs { height: 31px; flex: none; background: #cfd4dc; border-top: 2px solid #a9b0bc; display: flex; align-items: center; padding-left: 5px; font-size: 13px; color: #5a6674; gap: 0; }
.tab { display: flex; align-items: center; flex: none; white-space: nowrap; height: 25px; padding: 0 3px 0 1px; gap: 2px; margin-right: 6px; }
.tab svg { width: 16px; height: 16px; flex: none; }
.tab.act { background: #dfe6ee; border: 1px solid #c4e4ee; border-radius: 0 0 3px 3px; }

.viewport { flex: none; width: 1243px; padding: 1px 2px 2px 2px; background: #fff; border-left: 1px solid #7a8290; margin-left: 3px; }
.scene { display: block; width: 1238px; height: 889px; }
.ye { fill: #ffff00; }
.gr { fill: #00ff00; }
.dash path { fill: none; stroke: #b9b9b9; stroke-width: 1.200; stroke-dasharray: 10 5; }
.mode { font: 10.700px "Liberation Sans", sans-serif; fill: #000; }
.axx { font: 11px "Liberation Sans", sans-serif; fill: #ff0000; }
.val { font: 9.500px "Liberation Sans", sans-serif; fill: #222; text-anchor: middle; }

.panel { flex: 1; display: flex; flex-direction: column; margin-left: 4px; min-width: 0; border-left: 1px solid #a9b0bc; }
.panel-body { height: 831px; flex: none; background: #f0f0f0; padding: 6px 0 0 5px; border-right: 2px solid #cfd4dc; border-bottom: 1px solid #a9b0bc; position: relative; }
.panel-title { font-size: 12.200px; color: #111; height: 22px; line-height: 17px; }
.legend { width: 194px; height: 444px; background: #fff; border-top: 1px solid #98a0aa; border-left: 1px solid #c8ccd2; overflow: hidden; padding: 1px 0 0 6px; }
.lg { display: flex; align-items: center; height: 25px; font-size: 12.800px; color: #111; white-space: nowrap; gap: 6px; }
.sw { width: 19px; height: 19px; flex: none; border: 1px solid #cdd0d6; margin-top: -3px; }
.sw.g { background: #00ff00; } .sw.y { background: #ffff00; } .sw.r { background: #ff0000; }
.panel-btn { margin-top: 17px; margin-left: 1px; width: 28px; height: 27px; background: linear-gradient(#eceef2, #d2d6dc); border: 1px solid #b0b4bc; display: flex; align-items: center; justify-content: center; }
.panel-btn svg { width: 20px; height: 20px; }
.panel-tabs { flex: 1; padding-left: 5px; }
.ptab { display: flex; width: 22px; height: 25px; align-items: center; justify-content: center; background: #dfe3ea; border-radius: 0 0 3px 3px; }
.ptab svg { width: 16px; height: 17px; }

.statusbar { height: 27px; flex: none; position: relative; display: flex; align-items: stretch; background: linear-gradient(#e4e6ea 0, #c8ccd2 5px, #b2b7bf 7px, #b0b5bd 100%); font-size: 14px; color: #20262e; padding-top: 2px; }
.ready { width: 1095px; padding-left: 4px; font-size: 13.100px; line-height: 25px; color: #333; }
.pane { flex: none; border-left: 1px solid #2a2a2a; border-top: 1px solid #2a2a2a; border-right: 1px solid #f2f2f2; font: 14.200px "Liberation Sans", sans-serif; line-height: 22px; padding-left: 2px; overflow: hidden; margin-right: 1px; letter-spacing: -.4px; }
.p1 { width: 56px; } .p2 { width: 49px; } .p3 { width: 65px; } .p4 { width: 68px; } .p5 { width: 50px; } .p6 { width: 34px; }
.st { flex: none; border-right: 1px solid #989ca4; font-size: 13px; line-height: 25px; white-space: nowrap; overflow: hidden; padding-left: 2px; }
.s1 { width: 188px; } .s2 { width: 88px; } .s3 { width: 74px; } .s4 { width: 74px; } .s5 { border: 0; }

.anno { position: absolute; left: 0; top: 0; width: 1920px; height: 1042px; pointer-events: none; }
```
